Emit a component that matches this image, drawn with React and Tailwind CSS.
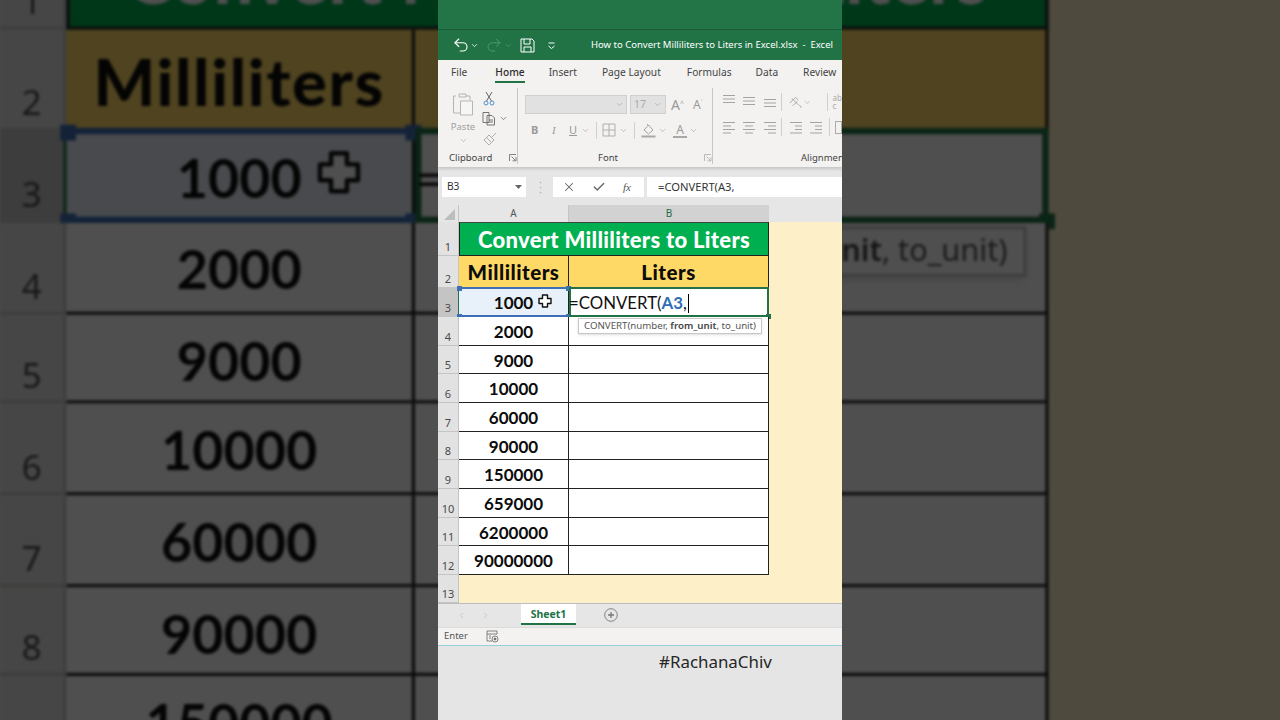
import React from "react";
import { Undo2, Redo2, ChevronDown, ChevronLeft, ChevronRight, X, Check } from "lucide-react";

const ui = "font-['Noto_Sans',sans-serif]";
const cell = "font-['Lato',sans-serif]";

const rows = [
  [3, "1000", 29], [4, "2000", 29], [5, "9000", 28], [6, "10000", 29], [7, "60000", 29],
  [8, "90000", 28], [9, "150000", 29], [10, "659000", 29], [11, "6200000", 28], [12, "90000000", 29],
];

function RowHead({ n, active }) {
  return (
    <div className={`w-[21px] shrink-0 h-full flex items-end justify-center pb-[1px] border-b border-r border-[#c4c4c4] text-[11px] leading-[14px] text-[#4a4a4a] ${ui} ${active ? "bg-[#c4c4c4] text-[#1f6b43]" : "bg-[#e2e2e2]"}`}>
      {n}
    </div>
  );
}

function Plus() {
  return (
    <svg viewBox="0 0 14 14" className="w-[14px] h-[14px]">
      <path d="M4.5 1h5v3.5H13v5H9.5V13h-5V9.5H1v-5h3.5z" fill="#fff" stroke="#111" strokeWidth="1.4" strokeLinejoin="round" />
    </svg>
  );
}

function Handle({ className }) {
  return <span className={`absolute w-[5px] h-[5px] ${className}`} />;
}

function Sheet() {
  return (
    <div className="w-[404px] h-[381px] bg-[#fdf0c8] flex flex-col">
      <div className="flex h-[34px] shrink-0">
        <RowHead n={1} />
        <div className={`w-[310px] bg-[#00b050] border border-[#222] border-t-[#444] flex items-center justify-center text-white font-black text-[22px] tracking-[0.3px] ${cell}`}>
          Convert Milliliters to Liters
        </div>
      </div>
      <div className="flex h-[32px] shrink-0">
        <RowHead n={2} />
        <div className={`w-[110px] bg-[#ffd966] border-b border-r border-[#222] flex items-center justify-center pt-[1px] text-[#0c0c0c] font-black text-[20.5px] tracking-[0.5px] ${cell}`}>Milliliters</div>
        <div className={`w-[200px] bg-[#ffd966] border-b border-r border-[#222] flex items-center justify-center pt-[1px] text-[#0c0c0c] font-black text-[20.5px] tracking-[0.5px] ${cell}`}>Liters</div>
      </div>
      {rows.map(([n, v, h], i) => (
        <div key={n} className={`flex shrink-0 relative ${h === 29 ? "h-[29px]" : "h-[28px]"}`}>
          <RowHead n={n} active={i === 0} />
          <div className={`w-[110px] relative border-b border-r border-[#222] flex items-center justify-center pt-[2px] text-[#0c0c0c] font-bold text-[17px] ${cell} ${i === 0 ? "bg-[#e8f0f9]" : "bg-white"}`}>
            {v}
            {i === 0 && (
              <span className="absolute left-[79px] top-[6px]"><Plus /></span>
            )}
          </div>
          <div className="w-[200px] bg-white border-b border-r border-[#222]" />
          {i === 0 && (
            <>
              <div className="absolute left-[20px] top-[-1px] w-[111px] h-[30px] border-y-2 border-[#3f6fb5] border-l border-l-[#217346]" />
              <Handle className="left-[19px] top-[-2px] bg-[#3f6fb5]" />
              <Handle className="left-[19px] top-[26px] bg-[#3f6fb5]" />
              <Handle className="left-[128px] top-[-2px] bg-[#3f6fb5]" />
              <Handle className="left-[128px] top-[26px] bg-[#3f6fb5]" />
              <div className={`absolute left-[131px] top-[-1px] w-[200px] h-[30px] bg-white border-2 border-[#217346] flex items-center pt-[2px] text-[16.8px] text-[#111] ${cell}`}>
                <span className="-ml-[2px] flex items-center">
                  =CONVERT(<span className="text-[#2f6db5] font-bold">A3</span>,<span className="w-px h-[19px] bg-black ml-[1px]" />
                </span>
              </div>
              <Handle className="left-[328px] top-[26px] bg-[#217346]" />
              <div className={`absolute z-10 left-[140px] top-[30px] w-[184px] h-[16px] bg-white border border-[#c8c8c8] shadow-sm flex items-center justify-center text-[9.7px] text-[#555] whitespace-nowrap ${ui}`}>
                CONVERT(number,&nbsp;<b className="text-[#444] font-semibold">from_unit</b>, to_unit)
              </div>
            </>
          )}
        </div>
      ))}
      <div className="flex h-[28px] shrink-0">
        <RowHead n={13} />
      </div>
    </div>
  );
}

function Lines({ w = [12, 12, 12], align = "l", y = 0 }) {
  return (
    <svg viewBox="0 0 14 14" className="w-[14px] h-[14px]" stroke="#a3a3a3" strokeWidth="1">
      {w.map((len, i) => {
        const x = align === "l" ? 1 : align === "c" ? 7 - len / 2 : 13 - len;
        const yy = y + 2.5 + i * 3.5;
        return <path key={i} d={`M${x} ${yy}h${len}`} />;
      })}
    </svg>
  );
}

function Chev({ className = "" }) {
  return <ChevronDown size={9} strokeWidth={1.5} className={`text-[#9a9a9a] ${className}`} />;
}

function Launcher({ dark }) {
  return (
    <svg viewBox="0 0 8 8" className="w-[8px] h-[8px]" fill="none" stroke={dark ? "#666" : "#aaa"} strokeWidth="0.8">
      <path d="M0.5 7V0.5H7M2.5 2.5L6.5 6.5M3.5 6.8H7V3.2" />
    </svg>
  );
}

function Sep({ className = "" }) {
  return <div className={`w-px bg-[#cfcfcf] ${className}`} />;
}

function Ribbon() {
  return (
    <div className={`h-[82px] bg-[#f3f2f1] flex shrink-0 ${ui} shadow-[0_2px_3px_rgba(0,0,0,0.15)] relative overflow-hidden`}>
      {/* Clipboard */}
      <div className="w-[80px] shrink-0 border-r border-[#c6c6c6] my-[3px] flex flex-col relative">
        <div className="flex h-[66px] pt-[3px]">
          <div className="ml-[12px] w-[26px] flex flex-col items-center">
            <svg viewBox="0 0 24 26" className="w-[24px] h-[26px]" fill="none" stroke="#b5b5b5" strokeWidth="1">
              <path d="M8 3h7v3H8zM5 5H2.5v17H10M15 5h4v4" />
              <path d="M9.5 10h12v14h-12z" fill="#f6f6f6" />
            </svg>
            <span className="text-[9.5px] leading-[13px] text-[#a0a0a0] mt-[3px]">Paste</span>
            <Chev className="mt-[3px]" />
          </div>
          <div className="ml-[6px] flex flex-col">
            <svg viewBox="0 0 12 15" className="w-[12px] h-[15px] ml-[1px]" fill="none" stroke="#555" strokeWidth="0.9">
              <path d="M3 1l5.5 9M9 1L3.5 10" />
              <circle cx="3" cy="12" r="2" stroke="#3f86c8" />
              <circle cx="9" cy="12" r="2" stroke="#3f86c8" />
            </svg>
            <div className="flex items-center mt-[5px]">
              <svg viewBox="0 0 15 15" className="w-[15px] h-[15px]" fill="none" stroke="#666" strokeWidth="0.9">
                <path d="M1 1.5h6v10H1zM5 4.5h5l2.5 2.5v7H5z" fill="#f3f2f1" />
                <path d="M7 9h4M7 11h4" />
              </svg>
              <ChevronDown size={9} strokeWidth={1.8} className="text-[#555] ml-[2px]" />
            </div>
            <svg viewBox="0 0 14 14" className="w-[14px] h-[14px] ml-[1px] mt-[6px]" fill="none" stroke="#a5a5a5" strokeWidth="0.9">
              <path d="M1 8l5-5 5 5-5 5zM8.5 5.5L13 1M3.5 5.5l5 5" />
            </svg>
          </div>
        </div>
        <div className="flex items-center h-[12px] text-[9.5px] text-[#444]">
          <span className="ml-[11px]">Clipboard</span>
          <span className="ml-[17px] flex"><Launcher dark /></span>
        </div>
      </div>
      {/* Font */}
      <div className="w-[195px] shrink-0 border-r border-[#c6c6c6] my-[3px] flex flex-col">
        <div className="h-[66px] flex flex-col">
          <div className="flex items-center mt-[7px] h-[19px]">
            <div className="ml-[7px] w-[102px] h-[19px] bg-[#e1e1e1] border border-[#d0d0d0] flex items-center justify-end pr-[2px]"><Chev /></div>
            <div className="ml-[3px] w-[36px] h-[19px] bg-[#e1e1e1] border border-[#d0d0d0] flex items-center justify-between px-[3px] text-[10.5px] text-[#aaa]">17<Chev /></div>
            <span className="ml-[5px] text-[14px] leading-none text-[#9a9a9a]">A<sup className="text-[7px]">^</sup></span>
            <span className="ml-[9px] text-[12px] leading-none text-[#9a9a9a]">A<sup className="text-[7px]">˅</sup></span>
          </div>
          <div className="flex items-center mt-[8px] h-[16px] text-[11px] text-[#9a9a9a]">
            <b className="ml-[13px] w-[7px]">B</b>
            <i className="ml-[14px] w-[6px] font-['Liberation_Serif',serif]">I</i>
            <span className="ml-[11px] underline">U</span>
            <Chev className="ml-[4px]" />
            <Sep className="h-[17px] ml-[6px]" />
            <svg viewBox="0 0 14 14" className="w-[14px] h-[14px] ml-[5px]" fill="none" stroke="#a8a8a8" strokeWidth="0.9">
              <path d="M1 1h12v12H1zM7 1v12M1 7h12" />
            </svg>
            <Chev className="ml-[3px]" />
            <Sep className="h-[17px] ml-[6px]" />
            <svg viewBox="0 0 15 16" className="w-[15px] h-[16px] ml-[6px]" fill="none" stroke="#9a9a9a" strokeWidth="0.9">
              <path d="M3 8l4.5-5 4.5 5-4.5 4zM6 2l2 2" />
              <rect x="0.5" y="13.5" width="14" height="2" fill="#a8a8a8" stroke="none" />
            </svg>
            <Chev className="ml-[2px]" />
            <div className="flex flex-col items-center ml-[6px] w-[14px]">
              <span className="text-[12px] leading-[13px] text-[#9a9a9a]">A</span>
              <span className="w-[14px] h-[2px] bg-[#a8a8a8]" />
            </div>
            <Chev className="ml-[2px]" />
          </div>
        </div>
        <div className="flex items-center h-[12px] text-[9.5px] text-[#444]">
          <span className="ml-[80px]">Font</span>
          <span className="ml-[86px] flex"><Launcher /></span>
        </div>
      </div>
      {/* Alignment */}
      <div className="flex-1 my-[3px] flex flex-col min-w-0">
        <div className="h-[66px] flex flex-col">
          <div className="flex items-center mt-[6px] h-[16px]">
            <span className="ml-[9px]"><Lines w={[12, 12, 12]} y={-2} /></span>
            <span className="ml-[6px]"><Lines w={[12, 12, 12]} y={0} /></span>
            <span className="ml-[7px]"><Lines w={[12, 12, 12]} y={2} /></span>
            <Sep className="h-[18px] ml-[4px]" />
            <svg viewBox="0 0 15 15" className="w-[15px] h-[15px] ml-[6px]" fill="none" stroke="#a5a5a5" strokeWidth="1">
              <path d="M2 8l6-6 3 3M5 11l5-5M4 3l7 7M12 10l2 3" />
            </svg>
            <Chev className="ml-[1px]" />
            <Sep className="h-[18px] ml-[15px]" />
            <span className="ml-[5px] text-[8px] leading-[8px] text-[#aaa]">ab<br />c</span>
          </div>
          <div className="flex items-center mt-[9px] h-[16px]">
            <span className="ml-[9px]"><Lines w={[12, 8, 12, 8]} /></span>
            <span className="ml-[6px]"><Lines w={[12, 8, 12, 8]} align="c" /></span>
            <span className="ml-[7px]"><Lines w={[12, 8, 12, 8]} align="r" /></span>
            <Sep className="h-[18px] ml-[4px]" />
            <span className="ml-[7px]"><Lines w={[12, 7, 7, 12]} align="r" /></span>
            <span className="ml-[6px]"><Lines w={[12, 7, 7, 12]} align="r" /></span>
            <Sep className="h-[18px] ml-[6px]" />
            <span className="ml-[5px] w-[9px] h-[13px] border border-[#aaa]" />
          </div>
        </div>
        <div className="flex items-center h-[12px] text-[9.5px] text-[#444] whitespace-nowrap">
          <span className="ml-[88px]">Alignment</span>
        </div>
      </div>
    </div>
  );
}

function Excel() {
  return (
    <div className="relative w-[404px] h-[720px] mx-auto flex flex-col bg-[#e5e5e5] overflow-hidden">
      <div className="h-[30px] shrink-0 bg-[#237548] border-b border-[#1a5a37]" />
      <div className={`h-[30px] shrink-0 bg-[#217346] flex items-center text-white ${ui}`}>
        <Undo2 size={18} strokeWidth={1.5} className="ml-[14px]" />
        <ChevronDown size={9} strokeWidth={2} className="ml-[0px]" />
        <Redo2 size={18} strokeWidth={1.3} className="ml-[6px] text-[#4d9971]" />
        <ChevronDown size={9} strokeWidth={2} className="ml-[1px] text-[#4d9971]" />
        <svg viewBox="0 0 15 15" className="w-[15px] h-[15px] ml-[7px]" fill="none" stroke="#fff" strokeWidth="1">
          <path d="M1 1h11l2 2v11H1zM4 1v5h6V1M4 14V9h7v5" />
        </svg>
        <svg viewBox="0 0 9 9" className="w-[9px] h-[9px] ml-[12px]" fill="none" stroke="#fff" strokeWidth="1">
          <path d="M1.5 2h6M1.5 5l3 2.5 3-2.5" />
        </svg>
        <span className="ml-[35px] text-[9.5px] whitespace-nowrap">How to Convert Milliliters to Liters in Excel.xlsx&nbsp; -&nbsp; Excel</span>
      </div>
      <div className={`h-[25px] shrink-0 bg-[#f3f2f1] flex items-start pt-[5px] text-[10.2px] leading-[15px] text-[#444] whitespace-nowrap ${ui}`}>
        <span className="ml-[13px]">File</span>
        <span className="ml-[28px] relative font-medium text-[#2c2c2c]">
          Home
          <span className="absolute left-0 right-0 top-[16px] h-[2px] bg-[#217346]" />
        </span>
        <span className="ml-[24px]">Insert</span>
        <span className="ml-[25px]">Page Layout</span>
        <span className="ml-[26px]">Formulas</span>
        <span className="ml-[24px]">Data</span>
        <span className="ml-[25px]">Review</span>
      </div>
      <Ribbon />
      <div className={`h-[38px] shrink-0 bg-[#e6e6e6] flex items-center pt-[2px] ${ui}`}>
        <div className="ml-[4px] w-[84px] h-[20px] bg-white flex items-center justify-between pl-[5px] pr-[4px] text-[10.2px] text-[#333]">
          B3
          <svg viewBox="0 0 7 4" className="w-[7px] h-[4px]"><path d="M0 0h7L3.5 4z" fill="#666" /></svg>
        </div>
        <span className="ml-[13px] w-[3px] text-[#aaa] text-[10px] leading-[5px] flex flex-col items-center">
          <span>·</span><span>·</span><span>·</span>
        </span>
        <div className="ml-[11px] w-[91px] h-[20px] bg-white flex items-center text-[#555]">
          <X size={14} strokeWidth={1.8} className="ml-[9px] text-[#666]" />
          <Check size={14} strokeWidth={2.4} className="ml-[16px] text-[#666]" />
          <i className="ml-[17px] text-[11px] font-['Liberation_Serif',serif] text-[#555]">fx</i>
        </div>
        <div className="ml-[3px] flex-1 h-[20px] bg-white flex items-center pl-[11px] text-[11.2px] text-[#333]">=CONVERT(A3,</div>
      </div>
      <div className={`h-[17px] shrink-0 bg-[#e6e6e6] flex text-[10px] text-[#555] ${ui}`}>
        <div className="w-[21px] flex items-end justify-end border-r border-[#c4c4c4] pr-[3px] pb-[2px]">
          <svg viewBox="0 0 10 10" className="w-[11px] h-[11px]"><path d="M10 0v10H0z" fill="#bdbdbd" /></svg>
        </div>
        <div className="w-[110px] flex items-center justify-center border-r border-[#c4c4c4]">A</div>
        <div className="w-[200px] flex items-center justify-center bg-[#d2d2d2] text-[#1f6b43]">B</div>
        <div className="flex-1" />
      </div>
      <Sheet />
      <div className={`h-[24px] shrink-0 bg-[#e6e6e6] border-t border-[#bdbdbd] flex items-start ${ui}`}>
        <ChevronLeft size={9} strokeWidth={2.5} className="ml-[19px] mt-[7px] text-[#c4c4c4]" />
        <ChevronRight size={9} strokeWidth={2.5} className="ml-[15px] mt-[7px] text-[#c4c4c4]" />
        <div className="ml-[31px] w-[55px] h-[21px] bg-white border-b-2 border-[#217346] flex items-center justify-center pt-[3px] text-[10.5px] font-bold text-[#217346]">Sheet1</div>
        <svg viewBox="0 0 14 14" className="w-[14px] h-[14px] ml-[28px] mt-[4px]" fill="none" stroke="#777" strokeWidth="0.9">
          <circle cx="7" cy="7" r="6.3" />
          <path d="M4 7h6M7 4v6" strokeWidth="1.3" />
        </svg>
      </div>
      <div className={`h-[19px] shrink-0 bg-[#f3f2f1] border-t border-[#dcdcdc] border-b border-b-[#93d2d8] flex items-center text-[9.5px] text-[#555] ${ui}`}>
        <span className="ml-[6px]">Enter</span>
        <svg viewBox="0 0 13 13" className="w-[13px] h-[13px] ml-[18px]" fill="none" stroke="#666" strokeWidth="0.8">
          <path d="M1 1h10v3H1zM1 4v7h5M3 6h2M3 8h2" />
          <circle cx="9" cy="9" r="3" />
          <circle cx="9" cy="9" r="1" fill="#666" />
        </svg>
      </div>
      <div className={`flex-1 bg-[#e5e5e5] pt-[6px] pl-[221px] text-[16.9px] leading-[20px] text-[#262626] whitespace-nowrap ${ui}`}>
        #RachanaChiv
      </div>
    </div>
  );
}

export default function App() {
  return (
    <div className="relative w-[1280px] h-[720px] overflow-hidden bg-[#4b4b3e]">
      <div className="absolute left-0 top-[-78px] w-[404px] origin-top-left scale-[3.168] brightness-[0.31] blur-[0.5px]">
        <Sheet />
      </div>
      <Excel />
    </div>
  );
}
